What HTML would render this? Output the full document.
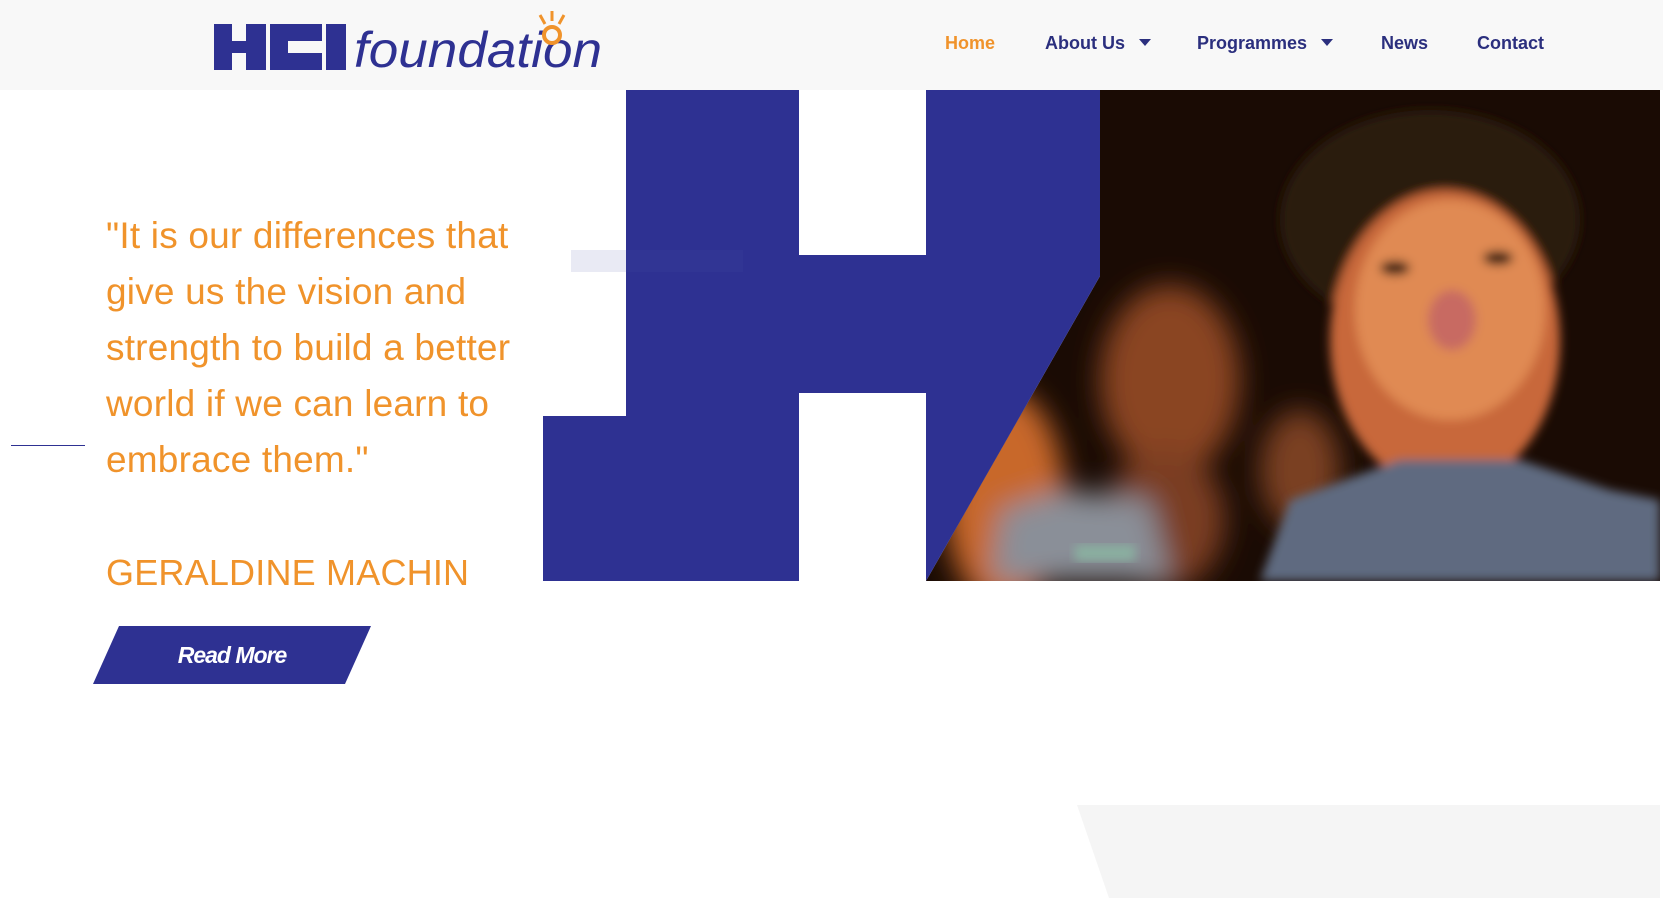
<!DOCTYPE html>
<html><head><meta charset="utf-8"><style>
*{margin:0;padding:0;box-sizing:border-box}
body{width:1663px;height:898px;overflow:hidden;background:#fff;font-family:"Liberation Sans",Arial,sans-serif;position:relative}
header{position:absolute;left:0;top:0;width:1663px;height:90px;background:#f8f8f8}
.nav{position:absolute;top:33px;font-size:18px;font-weight:bold;color:#2b2f7e;white-space:nowrap}
.nav.home{color:#f0932b}
.caret{display:inline-block;width:0;height:0;border-left:6px solid transparent;border-right:6px solid transparent;border-top:7px solid #2b2f7e;margin-left:14px;vertical-align:3px}
.quote{position:absolute;left:106px;top:208px;font-size:37px;line-height:56px;color:#f0932b;white-space:nowrap;letter-spacing:0.2px}
.name{position:absolute;left:106px;top:552px;font-size:36px;color:#f0932b;letter-spacing:0.2px}
.btn{position:absolute;left:93px;top:626px;width:278px;height:58px}
.btn span{position:absolute;left:0;top:0;width:100%;text-align:center;line-height:58px;color:#fff;font-style:italic;font-weight:bold;font-size:23px;letter-spacing:-1px}
</style></head><body>
<header>
<svg style="position:absolute;left:214px;top:11px" width="400" height="66" viewBox="0 0 400 66">
<g fill="#2e3192">
<rect x="0" y="13" width="52" height="46"/><rect x="56" y="13" width="52" height="46"/><rect x="112" y="13" width="20" height="46"/>
</g>
<g fill="#f8f8f8"><rect x="18" y="13" width="14" height="17"/><rect x="18" y="42" width="14" height="17"/><rect x="74" y="30" width="34" height="12"/></g>
<text x="140" y="56" font-family="Liberation Sans,sans-serif" font-style="italic" font-size="50" fill="#2e3192" textLength="248" lengthAdjust="spacingAndGlyphs">foundation</text>
<circle cx="338" cy="24" r="8" fill="none" stroke="#f0932b" stroke-width="4"/>
<g stroke="#f0932b" stroke-width="3"><line x1="338" y1="0" x2="338" y2="10"/><line x1="326" y1="4" x2="331" y2="13"/><line x1="350" y1="4" x2="345" y2="13"/></g>
</svg>
<div class="nav home" style="left:945px">Home</div>
<div class="nav" style="left:1045px">About Us<span class="caret"></span></div>
<div class="nav" style="left:1197px">Programmes<span class="caret"></span></div>
<div class="nav" style="left:1381px">News</div>
<div class="nav" style="left:1477px">Contact</div>
</header>
<svg style="position:absolute;left:0;top:90px" width="1663" height="500" viewBox="0 90 1663 500">
<defs>
<clipPath id="ph"><polygon points="1100,90 1660,90 1660,581 926,581 1100,276"/></clipPath>
<filter id="bl" x="-10%" y="-10%" width="120%" height="120%"><feGaussianBlur stdDeviation="14"/></filter>
<filter id="bl2"><feGaussianBlur stdDeviation="5"/></filter>
</defs>
<g clip-path="url(#ph)">
<rect x="900" y="90" width="760" height="491" fill="#1a0b04"/>
<g filter="url(#bl)">
<ellipse cx="1170" cy="380" rx="70" ry="95" fill="#8a4520"/>
<ellipse cx="1165" cy="520" rx="60" ry="70" fill="#7a3e20"/>
<ellipse cx="1005" cy="500" rx="60" ry="110" fill="#c8682a"/>
<polygon points="990,581 1000,510 1060,490 1150,500 1170,581" fill="#8a8f98"/>
<ellipse cx="1300" cy="470" rx="40" ry="60" fill="#7a4024"/>
</g>
<g filter="url(#bl2)">
<ellipse cx="1430" cy="220" rx="150" ry="110" fill="#2a1a10"/>
<ellipse cx="1445" cy="340" rx="115" ry="150" fill="#c8683a"/>
<ellipse cx="1450" cy="310" rx="95" ry="110" fill="#e08a52"/>
<ellipse cx="1452" cy="320" rx="24" ry="30" fill="#c86a62"/>
<ellipse cx="1395" cy="268" rx="15" ry="7" fill="#2a1208"/>
<ellipse cx="1498" cy="258" rx="15" ry="7" fill="#2a1208"/>
<polygon points="1260,581 1290,500 1400,460 1520,460 1610,490 1660,500 1660,581" fill="#5e6a80"/>
</g>
<rect x="1075" y="545" width="60" height="16" fill="#8ab0a0" filter="url(#bl2)"/>
</g>
<g fill="#2e3192">
<polygon points="626,90 799,90 799,255 926,255 926,90 1100,90 1100,276 926,581 926,393 799,393 799,581 543,581 543,416 626,416"/>
</g>
<rect x="571" y="250" width="172" height="22" fill="#4a4fa5" opacity="0.12"/>
</svg>
<div style="position:absolute;left:11px;top:445px;width:74px;height:1px;background:#2e3192"></div>
<div class="quote">"It is our differences that<br>give us the vision and<br>strength to build a better<br>world if we can learn to<br>embrace them."</div>
<div class="name">GERALDINE MACHIN</div>
<div class="btn"><svg width="278" height="58" style="position:absolute;left:0;top:0"><polygon points="26,0 278,0 252,58 0,58" fill="#2e3192"/></svg><span>Read More</span></div>
<svg style="position:absolute;left:0;top:0;pointer-events:none" width="1663" height="898"><polygon points="1077,805 1660,805 1660,898 1109,898" fill="#f5f5f5"/></svg>
</body></html>
